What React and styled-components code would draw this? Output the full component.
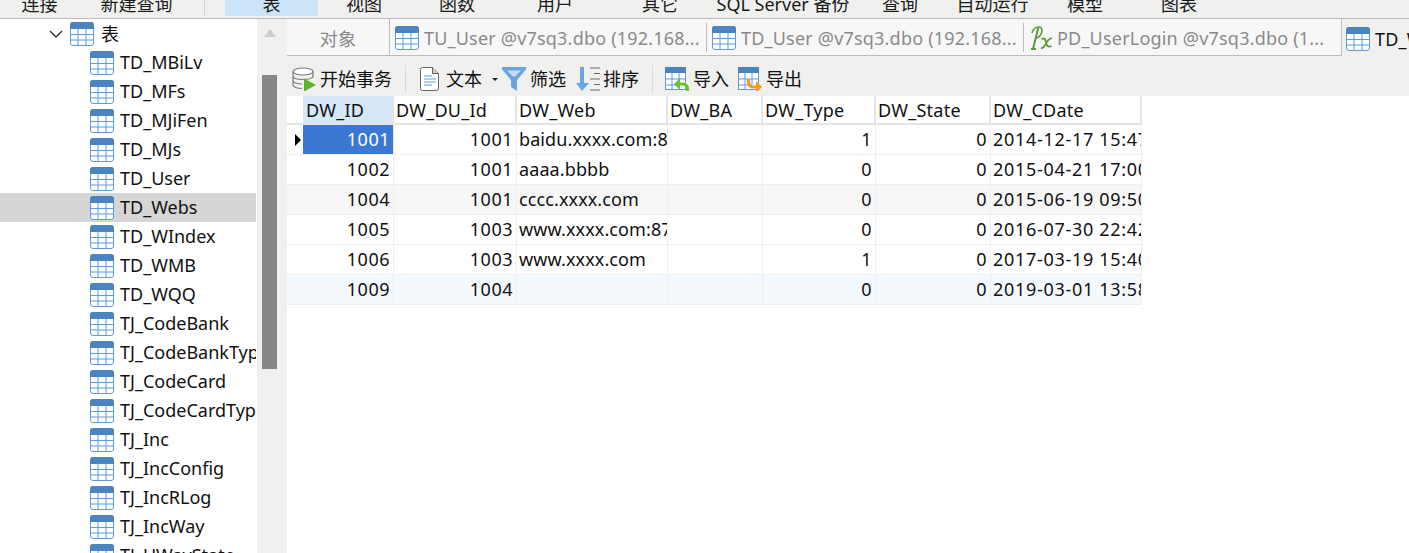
import React from "react";
import styled, { createGlobalStyle } from "styled-components";

const GlobalStyle = createGlobalStyle`
  html, body { margin: 0; padding: 0; background: #fff; }
  body { font-family: "Noto Sans", "Noto Sans CJK SC", sans-serif; font-size: 18px; color: #111; }
`;

const Page = styled.div`
  width: 1409px;
  height: 553px;
  overflow: hidden;
  display: flex;
  flex-direction: column;
`;

const MenuBar = styled.div`
  height: 18px;
  flex: none;
  display: flex;
  overflow: hidden;
  background: #f0f0ef;
  border-bottom: 1px solid #bcbcbc;
`;

const MenuItem = styled.div`
  flex: none;
  width: ${(p) => p.$w}px;
  height: 16px;
  background: ${(p) => (p.$active ? "#cce4f7" : "transparent")};
  text-align: center;
  line-height: 8px;
  white-space: nowrap;
  font-size: 18px;
  color: #1a1a1a;
`;

const MenuDivider = styled.div`
  flex: none;
  width: 1px;
  height: 16px;
  margin: 0 20px 0 10px;
  background: #d6d6d6;
`;

const Body = styled.div`
  flex: 1;
  display: flex;
  min-height: 0;
`;

const Tree = styled.div`
  flex: none;
  width: 257px;
  overflow: hidden;
`;

const TreeRow = styled.div`
  height: 29px;
  width: 256px;
  display: flex;
  align-items: center;
  gap: ${(p) => (p.$group ? 7 : 6)}px;
  padding-left: ${(p) => (p.$group ? 49 : 90)}px;
  box-sizing: border-box;
  white-space: nowrap;
  overflow: hidden;
  background: ${(p) => (p.$selected ? "#d6d6d6" : "transparent")};
`;

const TreeLabel = styled.span`
  padding-bottom: 2px;
`;

const Scrollbar = styled.div`
  flex: none;
  width: 30px;
  background: #f0f0ef;
  display: flex;
  flex-direction: column;
  align-items: center;
  padding: 10px 5px 0 0;
  box-sizing: border-box;
`;

const ScrollArrow = styled.div`
  width: 0;
  height: 0;
  border-left: 6px solid transparent;
  border-right: 6px solid transparent;
  border-bottom: 8px solid #cdcdcd;
`;

const ScrollThumb = styled.div`
  width: 15px;
  height: 294px;
  margin-top: 38px;
  background: #868686;
`;

const Main = styled.div`
  flex: 1;
  min-width: 0;
  display: flex;
  flex-direction: column;
`;

const TabBar = styled.div`
  height: 37px;
  flex: none;
  display: flex;
  overflow: hidden;
  background: #f7f7f7;
  box-sizing: border-box;
`;

const Tab = styled.div`
  flex: none;
  width: ${(p) => p.$w}px;
  height: 37px;
  box-sizing: border-box;
  display: flex;
  align-items: center;
  gap: ${(p) => p.$gap ?? 5}px;
  padding: 2px 0 0 ${(p) => p.$pad ?? 5}px;
  white-space: nowrap;
  overflow: hidden;
  font-size: 18px;
  letter-spacing: 0.2px;
  color: ${(p) => (p.$active ? "#111" : "#8a8a8a")};
  background: ${(p) => (p.$active ? "#f0f0ef" : "#f7f7f7")};
  border-bottom: ${(p) => (p.$active ? "none" : "1px solid #bcbcbc")};
  border-right: ${(p) => (p.$edge ? "1px solid #bcbcbc" : "none")};
  justify-content: ${(p) => (p.$center ? "center" : "flex-start")};
  position: relative;
  &::after {
    content: "";
    display: ${(p) => (p.$divider ? "block" : "none")};
    position: absolute;
    right: 0;
    top: 4px;
    bottom: 3px;
    width: 1px;
    background: #bcbcbc;
  }
`;

const Toolbar = styled.div`
  height: 40px;
  flex: none;
  display: flex;
  align-items: center;
  background: #f0f0ef;
  padding: 6px 0 0 5px;
  box-sizing: border-box;
`;

const ToolButton = styled.div`
  display: flex;
  align-items: center;
  gap: ${(p) => p.$gap ?? 4}px;
  margin-right: ${(p) => p.$mr ?? 10}px;
  white-space: nowrap;
`;

const ToolLabel = styled.span`
  padding-bottom: 2px;
`;

const ToolDivider = styled.div`
  width: 1px;
  height: 28px;
  background: #d9d9d9;
  margin-right: ${(p) => p.$mr}px;
`;

const Caret = styled.span`
  width: 0;
  height: 0;
  margin-left: 4px;
  border-left: 3px solid transparent;
  border-right: 3px solid transparent;
  border-top: 3px solid #222;
`;

const Grid = styled.div`
  width: 855px;
  flex: none;
`;

const GridRow = styled.div`
  display: grid;
  grid-template-columns: 16px 91px 123px 151px 95px 113px 115px 151px;
  height: ${(p) => (p.$header ? 29 : 30)}px;
  background: ${(p) => p.$tint || "#fff"};
`;

const HeaderCell = styled.div`
  box-sizing: border-box;
  padding-left: ${(p) => (p.$active ? 3 : 2)}px;
  line-height: 28px;
  overflow: hidden;
  white-space: nowrap;
  letter-spacing: 0.25px;
  border-right: ${(p) => (p.$corner ? "none" : "2px solid #e4e4e4")};
  border-bottom: 2px solid #e4e4e4;
  background: ${(p) => (p.$active ? "#d5e7f8" : "transparent")};
`;

const Cell = styled.div`
  box-sizing: border-box;
  padding: 0 ${(p) => (p.$right ? 3 : 0)}px 0 ${(p) => (p.$right ? 0 : 2)}px;
  line-height: 29px;
  overflow: hidden;
  white-space: nowrap;
  letter-spacing: ${(p) => p.$track}px;
  text-align: ${(p) => (p.$right ? "right" : "left")};
  border-right: 1px solid #eeeeee;
  border-bottom: 1px solid #eeeeee;
  background: ${(p) => (p.$selected ? "#3a78d4" : "transparent")};
  color: ${(p) => (p.$selected ? "#fff" : "#111")};
`;

const Indicator = styled.div`
  box-sizing: border-box;
  display: flex;
  align-items: center;
  justify-content: center;
  padding-left: 6px;
  border-bottom: 1px solid #eeeeee;
`;

const Marker = styled.span`
  width: 0;
  height: 0;
  border-top: 6px solid transparent;
  border-bottom: 6px solid transparent;
  border-left: 6px solid #000;
`;

const Chevron = () => (
  <svg width="14" height="24" viewBox="0 0 14 24" fill="none">
    <path d="M1 9l6 6 6-6" stroke="#333" strokeWidth="1.4" />
  </svg>
);

const TableIcon = () => (
  <svg width="24" height="24" viewBox="0 0 24 24" style={{ flex: "none" }}>
    <rect x="0.5" y="0.5" width="23" height="23" rx="2.5" fill="#fff" stroke="#5c9bdc" />
    <path d="M0 7V3a3 3 0 0 1 3-3h18a3 3 0 0 1 3 3v4z" fill="#4c84bf" />
    <path d="M8 7v16M16 7v16M1 12.5h22M1 18h22" stroke="#5c9bdc" strokeWidth="1" fill="none" />
  </svg>
);

const BeginIcon = () => (
  <svg width="24" height="24" viewBox="0 0 24 24" fill="none">
    <path d="M1 4.5v13.500c0 2 4 3.500 9 3.500M21 4.500v6M1 9c0 2 4 3.500 10 3.500S21 11 21 9M1 13.500c0 2 4 3.500 9 3.500" stroke="#7a7a7a" strokeWidth="1.2" />
    <ellipse cx="11" cy="4.5" rx="10" ry="3.5" fill="#fff" stroke="#7a7a7a" strokeWidth="1.2" />
    <path d="M12 11.500l12 6.500-12 6.500z" fill="#5db52e" />
  </svg>
);

const DocIcon = () => (
  <svg width="20" height="24" viewBox="0 0 20 24" fill="none">
    <path d="M2.500.5h10l6 6v15a2 2 0 0 1-2 2h-14a2 2 0 0 1-2-2v-19a2 2 0 0 1 2-2z" fill="#fff" stroke="#666" />
    <path d="M12.500.5v6h6" fill="#ccc" stroke="#666" />
    <path d="M4 9h8M4 12h12M4 15h12M4 18h8" stroke="#5b9fdf" />
  </svg>
);

const FunnelIcon = () => (
  <svg width="24" height="24" viewBox="0 0 24 24">
    <path d="M0 0h24v2.500L15 13v11l-6-4v-7L0 2.500z" fill="#6aa5e2" />
    <path d="M5 3.500h14l-6 6h-2z" fill="#c6ddf5" />
  </svg>
);

const SortIcon = () => (
  <svg width="24" height="24" viewBox="0 0 24 24" fill="none">
    <path d="M4 0h4v16h5l-7 8-6-8h4z" fill="#6aa5e2" />
    <path d="M14 1h10M18 6.500h6M14 12h10M18 17.500h6M14 23h10" stroke="#666" />
  </svg>
);

const TransferIcon = ({ arrow, d, head }) => (
  <svg width="24" height="24" viewBox="0 0 24 24" fill="none">
    <rect x="0.5" y="0.5" width="20" height="22" fill="#fff" stroke="#5c9bdc" />
    <rect width="21" height="6" fill="#4c84bf" />
    <path d="M7 6v17M14 6v12M1 12h20M1 18h12" stroke="#5c9bdc" />
    <path d={d} stroke={arrow} strokeWidth="3.2" />
    <path d={head} fill={arrow} />
  </svg>
);

const PxIcon = () => (
  <svg width="24" height="24" viewBox="0 0 24 24" fill="none" style={{ flex: "none" }}>
    <path d="M9.500 1L4 23M2 23h5" stroke="#5c9a3c" strokeWidth="2" />
    <path d="M3 7C4 3 7 1 10 1c3 0 3.500 3 2.500 6-1 3-4 5.500-6.500 5" stroke="#5c9a3c" strokeWidth="1.600" />
    <path d="M12.500 13c3-1.500 4 .5 4.500 3 .5 3 1.500 6 5.500 4M23 12.500c-2-.5-3 .5-4 2l-4 6c-1 1.500-2 2-3 1" stroke="#5c9a3c" strokeWidth="1.800" />
  </svg>
);

const menus = [
  ["连接", 79], ["新建查询", 115], null, ["表", 93, true], ["视图", 92], ["函数", 94], ["用户", 102],
  ["其它", 108], ["SQL Server 备份", 138], ["查询", 96], ["自动运行", 89], ["模型", 96], ["图表", 92],
];

const tables = [
  "TD_MBiLv", "TD_MFs", "TD_MJiFen", "TD_MJs", "TD_User", "TD_Webs", "TD_WIndex", "TD_WMB", "TD_WQQ",
  "TJ_CodeBank", "TJ_CodeBankType", "TJ_CodeCard", "TJ_CodeCardType", "TJ_Inc", "TJ_IncConfig",
  "TJ_IncRLog", "TJ_IncWay", "TJ_UWayState",
];

const columns = ["DW_ID", "DW_DU_Id", "DW_Web", "DW_BA", "DW_Type", "DW_State", "DW_CDate"];

const rows = [
  ["1001", "1001", "baidu.xxxx.com:8080", "", "1", "0", "2014-12-17 15:47:00"],
  ["1002", "1001", "aaaa.bbbb", "", "0", "0", "2015-04-21 17:00:00"],
  ["1004", "1001", "cccc.xxxx.com", "", "0", "0", "2015-06-19 09:50:00"],
  ["1005", "1003", "www.xxxx.com:8787", "", "0", "0", "2016-07-30 22:42:00"],
  ["1006", "1003", "www.xxxx.com", "", "1", "0", "2017-03-19 15:40:00"],
  ["1009", "1004", "", "", "0", "0", "2019-03-01 13:58:00"],
];

const tints = { 2: "#f7f7f7", 5: "#f4f9fd" };
const numeric = [true, true, false, false, true, true, false];
const tracking = [0.5, 0.5, 0.1, 0, 0.5, 0.5, 0.7];

export default function App() {
  return (
    <Page>
      <GlobalStyle />
      <MenuBar>
        {menus.map((m, i) =>
          m ? (
            <MenuItem key={i} $w={m[1]} $active={m[2]}>{m[0]}</MenuItem>
          ) : (
            <MenuDivider key={i} />
          )
        )}
      </MenuBar>
      <Body>
        <Tree>
          <TreeRow $group>
            <Chevron />
            <TableIcon />
            <TreeLabel>表</TreeLabel>
          </TreeRow>
          {tables.map((t) => (
            <TreeRow key={t} $selected={t === "TD_Webs"}>
              <TableIcon />
              <TreeLabel>{t}</TreeLabel>
            </TreeRow>
          ))}
        </Tree>
        <Scrollbar>
          <ScrollArrow />
          <ScrollThumb />
        </Scrollbar>
        <Main>
          <TabBar>
            <Tab $w={103} $edge $center $pad={0}>对象</Tab>
            <Tab $w={317} $divider><TableIcon />TU_User @v7sq3.dbo (192.168...</Tab>
            <Tab $w={317} $divider><TableIcon />TD_User @v7sq3.dbo (192.168...</Tab>
            <Tab $w={318} $edge $gap={4}><PxIcon />PD_UserLogin @v7sq3.dbo (1...</Tab>
            <Tab $w={67} $active $pad={4}><TableIcon />TD_Webs</Tab>
          </TabBar>
          <Toolbar>
            <ToolButton $mr={13}><BeginIcon /><ToolLabel>开始事务</ToolLabel></ToolButton>
            <ToolDivider $mr={14} />
            <ToolButton $gap={6} $mr={4}><DocIcon /><ToolLabel>文本</ToolLabel><Caret /></ToolButton>
            <ToolButton $mr={10}><FunnelIcon /><ToolLabel>筛选</ToolLabel></ToolButton>
            <ToolButton $gap={3} $mr={13}><SortIcon /><ToolLabel>排序</ToolLabel></ToolButton>
            <ToolDivider $mr={12} />
            <ToolButton $mr={9}>
              <TransferIcon
                arrow="#6cc02e"
                d="M22.500 24v-2a5 5 0 0 0-5-5H14"
                head="M9 17l6-6v12z"
              />
              <ToolLabel>导入</ToolLabel>
            </ToolButton>
            <ToolButton>
              <TransferIcon
                arrow="#f39a1e"
                d="M10.500 12v3a5 5 0 0 0 5 5H19"
                head="M24 20l-6-6v12z"
              />
              <ToolLabel>导出</ToolLabel>
            </ToolButton>
          </Toolbar>
          <Grid>
            <GridRow $header>
              <HeaderCell $corner />
              {columns.map((c, i) => (
                <HeaderCell key={c} $active={i === 0}>{c}</HeaderCell>
              ))}
            </GridRow>
            {rows.map((r, ri) => (
              <GridRow key={ri} $tint={tints[ri]}>
                <Indicator>{ri === 0 && <Marker />}</Indicator>
                {r.map((v, ci) => (
                  <Cell key={ci} $right={numeric[ci]} $track={tracking[ci]} $selected={ri === 0 && ci === 0}>{v}</Cell>
                ))}
              </GridRow>
            ))}
          </Grid>
        </Main>
      </Body>
    </Page>
  );
}
